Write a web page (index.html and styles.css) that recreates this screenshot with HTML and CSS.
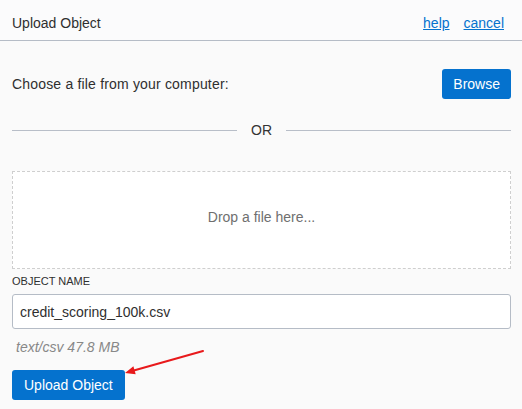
FILE: index.html
```html
<!DOCTYPE html>
<html lang="en">
<head>
<meta charset="utf-8">
<title>Upload Object</title>
<link rel="stylesheet" href="styles.css">
</head>
<body>
<div class="dialog">
  <header class="header">
    <h1 class="title">Upload Object</h1>
    <nav class="links">
      <a href="#" class="link">help</a>
      <a href="#" class="link">cancel</a>
    </nav>
  </header>
  <main class="content">
    <div class="choose-row">
      <span class="choose-text">Choose a file from your computer:</span>
      <button class="btn">Browse</button>
    </div>
    <div class="or-row">
      <span class="or-line"></span>
      <span class="or-text">OR</span>
      <span class="or-line"></span>
    </div>
    <div class="dropzone">Drop a file here...</div>
    <label class="field-label" for="objname">OBJECT NAME</label>
    <input id="objname" class="field-input" type="text" value="credit_scoring_100k.csv">
    <div class="file-meta">text/csv 47.8 MB</div>
    <button class="btn btn-upload">Upload Object</button>
  </main>
  <svg class="annotation" width="522" height="409" viewBox="0 0 522 409" aria-hidden="true">
    <line x1="203" y1="351" x2="132" y2="371" stroke="#e8191b" stroke-width="2" stroke-linecap="round"/>
    <polygon points="125,373 135.7,374.3 133.4,366.2" fill="#e8191b"/>
  </svg>
</div>
</body>
</html>
```
FILE: styles.css
```css
html, body {
  margin: 0;
  padding: 0;
  background: #fafafa;
}
body {
  font-family: "Liberation Sans", Arial, sans-serif;
  font-size: 14px;
  color: #2f2f2f;
}
.dialog {
  position: relative;
  width: 522px;
  height: 409px;
  overflow: hidden;
}
.header {
  box-sizing: border-box;
  height: 41px;
  padding: 6px 18px 0 12px;
  border-bottom: 1px solid #b5bcc6;
  display: flex;
  align-items: center;
  justify-content: space-between;
  background: #fbfbfc;
}
.title {
  margin: 0;
  font-size: 14px;
  font-weight: normal;
  line-height: 16px;
}
.links {
  display: flex;
  gap: 14px;
  line-height: 16px;
}
.link {
  color: #0572ce;
  text-decoration: underline;
}
.content {
  padding: 0 11px 0 12px;
  display: flex;
  flex-direction: column;
}
.choose-row {
  margin-top: 28px;
  display: flex;
  align-items: center;
  justify-content: space-between;
}
.choose-text {
  line-height: 16px;
  letter-spacing: 0.18px;
}
.btn {
  box-sizing: border-box;
  height: 30px;
  padding: 0 11px;
  border: none;
  border-radius: 3px;
  background: #0572ce;
  color: #fff;
  font-family: "Liberation Sans", Arial, sans-serif;
  font-size: 14px;
  line-height: 16px;
}
.or-row {
  margin-top: 23px;
  display: flex;
  align-items: center;
  gap: 14px;
  line-height: 16px;
}
.or-line {
  flex: 1;
  height: 1px;
  background: #b8bec8;
}
.or-text {
  color: #333;
}
.dropzone {
  box-sizing: border-box;
  margin-top: 33px;
  height: 98px;
  padding-bottom: 6px;
  border: 1px dashed #cfcfcf;
  background: #fff;
  display: flex;
  align-items: center;
  justify-content: center;
  color: #6f6f6f;
  line-height: 16px;
}
.field-label {
  margin-top: 6px;
  font-size: 11px;
  line-height: 13px;
  color: #2f2f2f;
}
.field-input {
  box-sizing: border-box;
  margin-top: 6px;
  height: 35px;
  width: 100%;
  padding: 0 7px;
  border: 1px solid #b5bcc6;
  border-radius: 3px;
  background: #fff;
  font-family: "Liberation Sans", Arial, sans-serif;
  font-size: 14px;
  color: #2f2f2f;
  outline: none;
}
.file-meta {
  margin-top: 10px;
  padding-left: 4px;
  font-style: italic;
  color: #888;
  line-height: 16px;
}
.btn-upload {
  align-self: flex-start;
  margin-top: 15px;
  padding: 0 12px;
}
.annotation {
  position: absolute;
  top: 0;
  left: 0;
  pointer-events: none;
}
```
